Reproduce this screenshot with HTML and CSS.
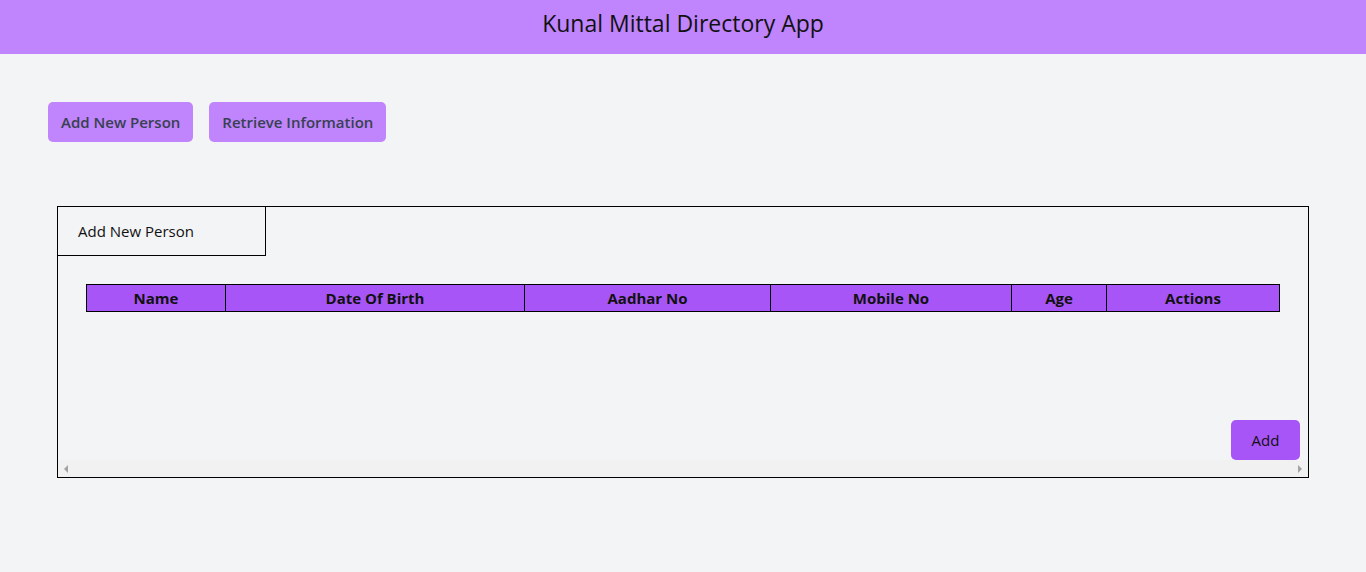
FILE: index.html
```html
<!DOCTYPE html>
<html lang="en">
<head>
    <meta charset="UTF-8">
    <meta name="viewport" content="width=device-width, initial-scale=1.0">
    <title>Kunal Mittal Directory App</title>
    <link rel="stylesheet" href="styles.css">
</head>
<body>

<header class="app-header">Kunal Mittal Directory App</header>

<main class="content">
    <div class="nav-buttons">
        <button class="nav-btn">Add New Person</button>
        <button class="nav-btn">Retrieve Information</button>
    </div>

    <section class="panel">
        <div class="tab">Add New Person</div>
        <div class="panel-body">
            <table class="people-table">
                <thead>
                    <tr>
                        <th class="col-name">Name</th>
                        <th class="col-dob">Date Of Birth</th>
                        <th class="col-aadhar">Aadhar No</th>
                        <th class="col-mobile">Mobile No</th>
                        <th class="col-age">Age</th>
                        <th class="col-actions">Actions</th>
                    </tr>
                </thead>
                <tbody></tbody>
            </table>
            <div class="add-row">
                <button class="add-btn">Add</button>
            </div>
        </div>
        <div class="scrollbar">
            <span class="arrow left"></span>
            <span class="arrow right"></span>
        </div>
    </section>
</main>

</body>
</html>
```

FILE: styles.css
```css
* {
    box-sizing: border-box;
}

body {
    margin: 0;
    background-color: #f3f4f6;
    font-family: "Open Sans", "Noto Sans", sans-serif;
    color: #111;
}

.app-header {
    height: 54px;
    background-color: #c084fc;
    text-align: center;
    font-size: 23px;
    line-height: 47px;
    color: #111;
}

.content {
    padding: 48px 57px 0 48px;
}

.nav-buttons {
    display: flex;
    gap: 16px;
}

.nav-btn {
    height: 40px;
    padding: 0 13px;
    background-color: #c084fc;
    border: none;
    border-radius: 5px;
    font-family: inherit;
    font-size: 15px;
    font-weight: 600;
    color: #374151;
}

.panel {
    margin: 64px 0 0 9px;
    border: 1px solid #000;
}

.tab {
    width: 208px;
    height: 49px;
    padding-left: 20px;
    border-right: 1px solid #000;
    border-bottom: 1px solid #000;
    font-size: 15px;
    line-height: 49px;
}

.panel-body {
    padding: 28px 8px 0 28px;
    height: 204px;
    display: flex;
    flex-direction: column;
}

.people-table {
    width: calc(100% - 20px);
    border-collapse: collapse;
    background-color: #a855f7;
}

.people-table th {
    height: 27px;
    padding: 0;
    border: 1px solid #000;
    font-size: 15px;
    font-weight: 700;
    line-height: 25px;
}

.col-name { width: 139px; }
.col-dob { width: 299px; }
.col-aadhar { width: 246px; }
.col-mobile { width: 241px; }
.col-age { width: 95px; }

.add-row {
    margin-top: auto;
    display: flex;
    justify-content: flex-end;
}

.add-btn {
    height: 40px;
    width: 69px;
    background-color: #a855f7;
    border: none;
    border-radius: 5px;
    font-family: inherit;
    font-size: 15px;
    color: #111;
}

.scrollbar {
    height: 17px;
    background-color: #f1f1f1;
    display: flex;
    justify-content: space-between;
    align-items: center;
    padding: 0 6px;
}

.arrow {
    width: 0;
    height: 0;
    border-top: 4px solid transparent;
    border-bottom: 4px solid transparent;
}

.arrow.left {
    border-right: 4px solid #a3a3a3;
}

.arrow.right {
    border-left: 4px solid #a3a3a3;
}
```
